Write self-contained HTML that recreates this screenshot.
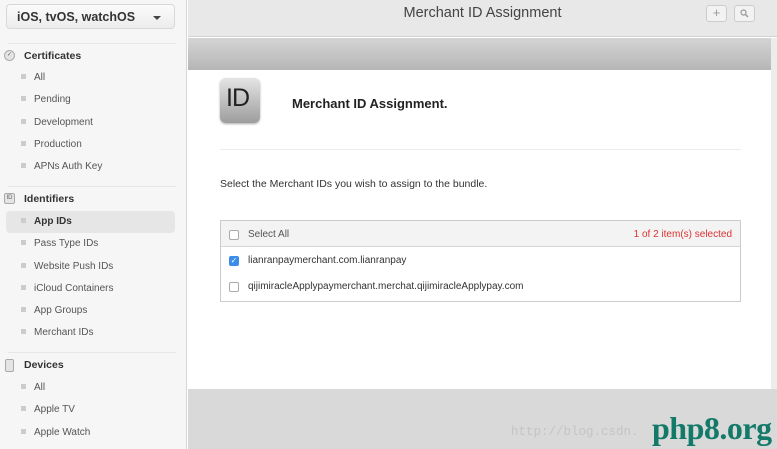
<!DOCTYPE html>
<html><head><style>
*{margin:0;padding:0;box-sizing:border-box}
body{width:777px;height:449px;overflow:hidden;font-family:"Liberation Sans",sans-serif;background:#fff;position:relative}
.sb{position:absolute;left:0;top:0;width:187px;height:449px;background:#f6f6f6;border-right:1px solid #d6d6d6}
.sel{position:absolute;left:6px;top:4px;width:169px;height:25px;border:1px solid #d8d8d8;border-radius:4px;background:linear-gradient(#fbfbfb,#ececec);font-size:12.5px;font-weight:bold;color:#333;padding:5px 0 0 10px}
.sel:after{content:"";position:absolute;right:13px;top:11px;border:4px solid transparent;border-top:4px solid #444}
.hd{position:absolute;left:24px;font-size:10.5px;font-weight:bold;color:#333}
.ic{position:absolute;left:4px;width:11px;height:11px;border:1px solid #aaa;border-radius:2px;background:#e4e4e4;font-size:6px;color:#666;text-align:center;line-height:9px}
.it{position:absolute;left:34px;font-size:10px;color:#555}
.it:before{content:"";position:absolute;left:-13px;top:2px;width:5px;height:5px;background:#ccc}
.sep{position:absolute;left:8px;width:168px;height:1px;background:#e6e6e6}
.top{position:absolute;left:188px;top:0;width:589px;height:37px;background:#e8e8e8;border-bottom:1px solid #d2d2d2;text-align:center;font-size:14.5px;color:#444;padding-top:5px}
.btn{position:absolute;top:5px;width:21px;height:17px;border:1px solid #ccc;border-radius:3px;background:#f2f2f2;color:#999;font-size:13px;line-height:14px;text-align:center}
.band{position:absolute;left:188px;top:38px;width:583px;height:32px;background:linear-gradient(#d4d4d4,#b6b6b6)}
.scroll{position:absolute;left:771px;top:38px;width:6px;height:351px;background:#ececec}
.foot{position:absolute;left:188px;top:389px;width:589px;height:60px;background:#d9d9d9}
.idi{position:absolute;left:220px;top:78px;width:40px;height:45px;border-radius:6px;background:linear-gradient(#e4e4e4,#9d9d9d);font-size:25px;color:#222;padding:6px 0 0 6px;box-shadow:0 1px 2px #aaa;letter-spacing:-1px}
.tbl{position:absolute;left:220px;top:220px;width:521px;height:82px;border:1px solid #ccc}
.row{position:relative;height:26px;font-size:10px;color:#333;padding:8px 0 0 27px}
.cb{position:absolute;left:8px;top:9px;width:10px;height:10px;border:1px solid #aaa;border-radius:2px;background:#fff}
</style></head><body>
<div class="sb">
<div class="sel">iOS, tvOS, watchOS</div>
<div class="sep" style="top:43px"></div>
<div class="ic" style="top:50px;border-radius:6px">✓</div>
<div class="hd" style="top:50px">Certificates</div>
<div class="it" style="top:72px">All</div>
<div class="it" style="top:94px">Pending</div>
<div class="it" style="top:117px">Development</div>
<div class="it" style="top:139px">Production</div>
<div class="it" style="top:161px">APNs Auth Key</div>
<div class="sep" style="top:186px"></div>
<div class="ic" style="top:193px">ID</div>
<div class="hd" style="top:193px">Identifiers</div>
<div style="position:absolute;left:6px;top:211px;width:169px;height:22px;background:#e6e6e6;border-radius:4px"></div>
<div class="it" style="top:216px;font-weight:bold;color:#333">App IDs</div>
<div class="it" style="top:238px">Pass Type IDs</div>
<div class="it" style="top:261px">Website Push IDs</div>
<div class="it" style="top:283px">iCloud Containers</div>
<div class="it" style="top:305px">App Groups</div>
<div class="it" style="top:327px">Merchant IDs</div>
<div class="sep" style="top:352px"></div>
<div class="ic" style="top:359px;width:9px;height:13px;left:5px"></div>
<div class="hd" style="top:359px">Devices</div>
<div class="it" style="top:382px">All</div>
<div class="it" style="top:404px">Apple TV</div>
<div class="it" style="top:427px">Apple Watch</div>
</div>
<div class="top">Merchant ID Assignment
<div class="btn" style="left:518px">+</div>
<div class="btn" style="left:546px"><svg width="9" height="9" viewBox="0 0 9 9" style="margin-top:3px"><circle cx="3.5" cy="3.5" r="2.5" fill="none" stroke="#999" stroke-width="1.2"/><line x1="5.5" y1="5.5" x2="8" y2="8" stroke="#999" stroke-width="1.4"/></svg></div></div>
<div class="band"></div>
<div class="scroll"></div>
<div class="idi">ID</div>
<div style="position:absolute;left:292px;top:96px;font-size:13px;font-weight:bold;color:#222">Merchant ID Assignment.</div>
<div style="position:absolute;left:220px;top:149px;width:521px;height:1px;background:#ececec"></div>
<div style="position:absolute;left:220px;top:178px;font-size:10.5px;color:#333">Select the Merchant IDs you wish to assign to the bundle.</div>
<div class="tbl">
<div class="row" style="background:#f3f3f3;border-bottom:1px solid #d6d6d6;color:#555"><span class="cb"></span>Select All<span style="position:absolute;right:8px;top:8px;color:#d33">1 of 2 item(s) selected</span></div>
<div class="row"><span class="cb" style="background:#3b8ee8;border-color:#3b8ee8;color:#fff;font-size:8px;line-height:8px;text-align:center">✓</span>lianranpaymerchant.com.lianranpay</div>
<div class="row">
<span class="cb"></span>qijimiracleApplypaymerchant.merchat.qijimiracleApplypay.com</div>
</div>
<div class="foot"></div>
<div style="position:absolute;left:511px;top:425px;font-family:'Liberation Mono',monospace;font-size:12.5px;color:#c4c4c4">http://blog.csdn.</div>
<div style="position:absolute;left:652px;top:410px;font-family:'Liberation Serif',serif;font-size:32px;font-weight:bold;color:#137a6a;letter-spacing:-0.5px">php8.org</div>
</body></html>
